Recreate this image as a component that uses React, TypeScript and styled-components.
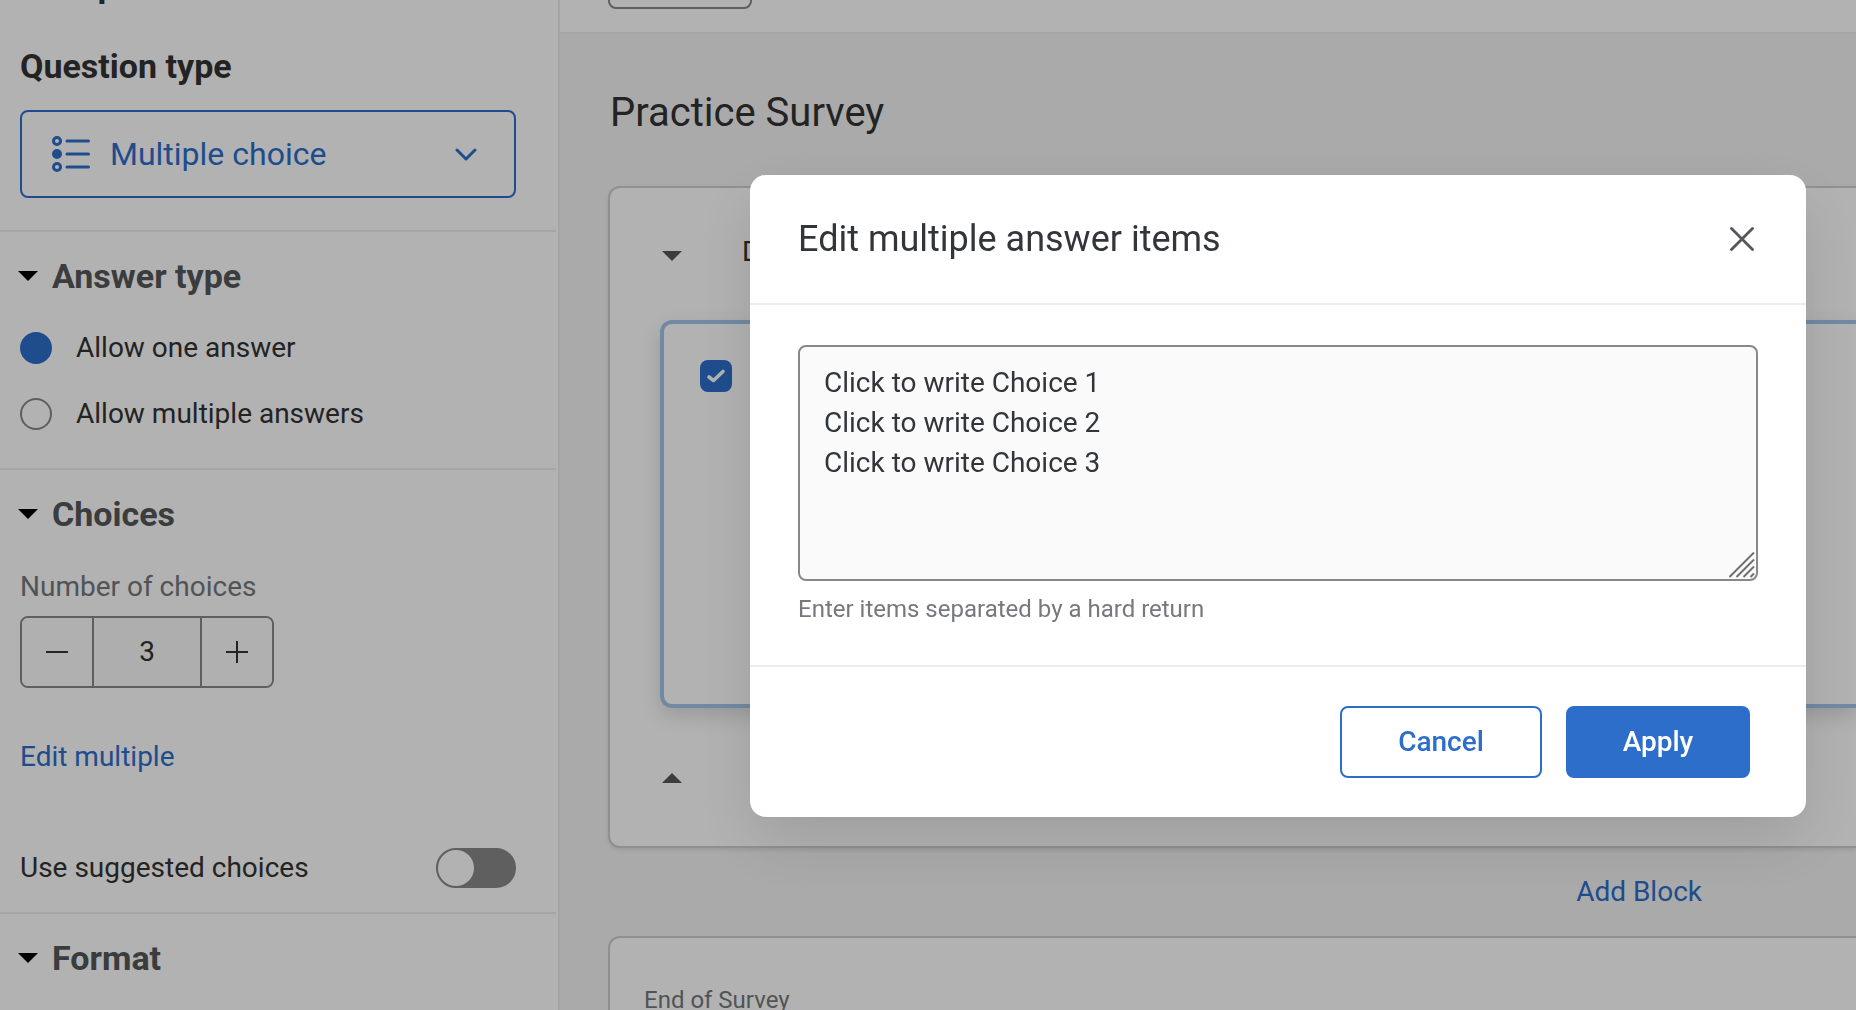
import React, { useState } from "react";
import styled, { createGlobalStyle } from "styled-components";

const FONT = `Roboto, "Noto Sans", sans-serif`;
const BLUE = "#2d6ecb";
const INK = "#32363a";
const MUTED = "#75797d";
const LINE = "#ededed";
const EDGE = "#888888";

const GlobalStyle = createGlobalStyle`
  *, *::before, *::after { box-sizing: border-box; }
  body { margin: 0; font-family: ${FONT}; font-size: 28px; line-height: 40px; color: #333333; overflow: hidden; }
  button, input, select, textarea { font: inherit; color: inherit; margin: 0; }
  h1, h2, h3, p { margin: 0; }
`;

const Page = styled.div`
  display: grid;
  grid-template-columns: 560px minmax(0, 1fr);
  height: 100vh;
  overflow: hidden;
`;

/* ---------- Sidebar ---------- */

const Sidebar = styled.aside`
  background: #ffffff;
  border-right: 2px solid ${LINE};
  overflow: hidden;
`;

const SidebarHeader = styled.header`
  display: flex;
  align-items: flex-end;
  height: 5px;
  padding: 0 20px;
  overflow: hidden;
`;

const PaneHeading = styled.h2`
  font-size: 34px;
  font-weight: 700;
  line-height: 40px;
  color: #333333;
`;

const Section = styled.section<{ $top?: number; $bottom?: number }>`
  display: flex;
  flex-direction: column;
  margin-right: 2px;
  padding: ${(p) => p.$top ?? 24}px 40px ${(p) => p.$bottom ?? 24}px 20px;

  &:not(:last-child) {
    border-bottom: 2px solid ${LINE};
  }
`;

const TypePicker = styled.div`
  position: relative;
  display: flex;
  align-items: center;
  height: 88px;
  margin-top: 24px;
  border: 2px solid ${BLUE};
  border-radius: 8px;
  color: ${BLUE};

  & > svg {
    position: absolute;
    pointer-events: none;
  }
  & > svg:first-child {
    left: 30px;
  }
  & > svg:last-child {
    right: 36px;
  }
`;

const TypeSelect = styled.select`
  appearance: none;
  width: 100%;
  height: 100%;
  padding: 0 80px 0 88px;
  border: 0;
  background: transparent;
  font-size: 32px;
  outline: none;
`;

const Collapse = styled.button`
  display: flex;
  align-items: center;
  gap: 14px;
  margin-left: -2px;
  padding: 0;
  border: 0;
  background: none;
  font-size: 34px;
  font-weight: 700;
  line-height: 40px;
  color: #53565a;
  text-align: left;

  & > svg {
    color: #000000;
  }
`;

const RadioGroup = styled.div`
  display: flex;
  flex-direction: column;
  gap: 34px;
  margin-top: 36px;
`;

const RadioLabel = styled.label`
  display: flex;
  align-items: center;
  gap: 24px;
  height: 32px;
`;

const Radio = styled.input`
  appearance: none;
  width: 32px;
  height: 32px;
  border: 2px solid ${EDGE};
  border-radius: 50%;
  background: #ffffff;

  &:checked {
    border-color: ${BLUE};
    background: ${BLUE};
  }
`;

const FieldLabel = styled.label`
  margin-top: 33px;
  color: ${MUTED};
`;

const Stepper = styled.div`
  display: flex;
  align-self: flex-start;
  width: 254px;
  height: 72px;
  margin-top: 9px;
  border: 2px solid ${EDGE};
  border-radius: 8px;
  overflow: hidden;
`;

const StepButton = styled.button`
  display: flex;
  flex: 0 0 70px;
  align-items: center;
  justify-content: center;
  padding: 0;
  border: 0;
  background: #fcfcfc;
  color: ${INK};
`;

const StepValue = styled.input`
  flex: 1;
  min-width: 0;
  padding: 0;
  border: 0;
  border-left: 2px solid ${EDGE};
  border-right: 2px solid ${EDGE};
  background: #fafafa;
  text-align: center;
  outline: none;
`;

const LinkButton = styled.button`
  align-self: flex-start;
  margin-top: 49px;
  padding: 0;
  border: 0;
  background: none;
  color: ${BLUE};
`;

const SwitchRow = styled.label`
  display: flex;
  align-items: center;
  justify-content: space-between;
  margin-top: 71px;
`;

const Switch = styled.input`
  appearance: none;
  display: flex;
  width: 80px;
  height: 40px;
  padding: 0;
  border: 2px solid ${EDGE};
  border-radius: 20px;
  background: ${EDGE};

  &::before {
    content: "";
    width: 36px;
    height: 36px;
    border-radius: 50%;
    background: #ffffff;
  }
  &:checked {
    justify-content: flex-end;
    border-color: ${BLUE};
    background: ${BLUE};
  }
`;

/* ---------- Survey canvas ---------- */

const Main = styled.main`
  display: flex;
  flex-direction: column;
  background: #f4f4f4;
  overflow: hidden;
`;

const TopBar = styled.div`
  display: flex;
  flex: none;
  align-items: flex-end;
  height: 34px;
  padding: 0 48px 23px;
  border-bottom: 2px solid ${LINE};
  background: #ffffff;
  overflow: hidden;
`;

const ToolButton = styled.button`
  flex: none;
  width: 144px;
  height: 72px;
  border: 2px solid ${EDGE};
  border-radius: 8px;
  background: #ffffff;
`;

const Canvas = styled.div`
  display: flex;
  flex-direction: column;
  padding: 55px 0 0 48px;
`;

const SurveyTitle = styled.h1`
  padding-left: 2px;
  font-size: 40px;
  font-weight: 400;
  line-height: 48px;
`;

const Block = styled.section`
  display: flex;
  flex-direction: column;
  margin-top: 49px;
  padding: 44px 0 48px 50px;
  border: 2px solid #cfcfcf;
  border-right: 0;
  border-radius: 12px 0 0 12px;
  background: #ffffff;
  box-shadow: 0 2px 4px rgba(0, 0, 0, 0.1);
`;

const BlockRow = styled.div<{ $align?: string }>`
  display: flex;
  align-items: ${(p) => p.$align ?? "center"};
  gap: 60px;
  height: 40px;
  padding-left: 2px;
`;

const IconButton = styled.button`
  display: flex;
  align-items: center;
  justify-content: center;
  padding: 0;
  border: 0;
  background: none;
  color: #53565a;
`;

const Question = styled.article`
  min-height: 388px;
  margin: 48px 0 50px;
  padding: 36px;
  border: 4px solid #a3c5ea;
  border-right: 0;
  border-radius: 12px 0 0 12px;
  box-shadow: 0 8px 20px rgba(0, 0, 0, 0.14);
`;

const CheckWrap = styled.span`
  position: relative;
  display: flex;
  width: 32px;
  height: 32px;

  & > svg {
    position: absolute;
    inset: 0;
    pointer-events: none;
  }
`;

const Check = styled.input`
  appearance: none;
  width: 32px;
  height: 32px;
  border-radius: 8px;
  background: ${BLUE};
`;

const AddRow = styled.div`
  display: flex;
  justify-content: flex-end;
  padding: 24px 154px 24px 0;

  & > button {
    margin: 0;
  }
`;

const EndBlock = styled.section`
  padding: 42px 34px 48px;
  border: 2px solid #cfcfcf;
  border-right: 0;
  border-radius: 12px 0 0 12px;
  background: #ffffff;
  color: ${MUTED};
  font-size: 24px;
`;

/* ---------- Dialog ---------- */

const Overlay = styled.div`
  position: fixed;
  inset: 0;
  display: flex;
  align-items: flex-start;
  justify-content: flex-end;
  padding: 175px 50px 0;
  background: rgba(0, 0, 0, 0.3);
`;

const Dialog = styled.div`
  display: flex;
  flex-direction: column;
  flex: 0 1 1056px;
  border-radius: 16px;
  background: #ffffff;
  color: ${INK};
  box-shadow: 0 24px 64px rgba(0, 0, 0, 0.12);
`;

const DialogHeader = styled.header`
  display: flex;
  align-items: center;
  justify-content: space-between;
  height: 130px;
  padding: 0 40px 0 48px;
  border-bottom: 2px solid ${LINE};
`;

const DialogTitle = styled.h2`
  font-size: 36px;
  font-weight: 400;
  line-height: 48px;
`;

const CloseButton = styled(IconButton)`
  width: 48px;
  height: 48px;
`;

const DialogBody = styled.div`
  display: flex;
  flex-direction: column;
  padding: 40px 48px;
`;

const AreaWrap = styled.div`
  position: relative;
  display: flex;

  & > svg {
    position: absolute;
    right: 3px;
    bottom: 3px;
    pointer-events: none;
  }
`;

const Area = styled.textarea`
  width: 100%;
  height: 236px;
  padding: 16px 24px;
  border: 2px solid ${EDGE};
  border-radius: 8px;
  background: #fafafa;
  line-height: 40px;
  resize: none;
  outline: none;
`;

const Hint = styled.p`
  margin-top: 12px;
  font-size: 24px;
  line-height: 32px;
  color: ${MUTED};
`;

const DialogFooter = styled.footer`
  display: flex;
  justify-content: flex-end;
  gap: 24px;
  padding: 39px 56px;
  border-top: 2px solid ${LINE};
`;

const ActionButton = styled.button<{ $primary?: boolean }>`
  width: ${(p) => (p.$primary ? 184 : 202)}px;
  height: 72px;
  padding: 0;
  border: 2px solid ${BLUE};
  border-radius: 8px;
  background: ${(p) => (p.$primary ? BLUE : "#ffffff")};
  color: ${(p) => (p.$primary ? "#ffffff" : BLUE)};
  font-weight: 500;
`;

/* ---------- Icons ---------- */

const Caret = ({ up = false }: { up?: boolean }) => (
  <svg width="20" height="10" viewBox="0 0 20 10" fill="currentColor" aria-hidden="true">
    <path d={up ? "M0 10L10 0L20 10Z" : "M0 0H20L10 10Z"} />
  </svg>
);

const ListIcon = () => (
  <svg width="38" height="36" viewBox="0 0 38 36" fill="none" stroke="currentColor" strokeWidth="3" aria-hidden="true">
    <circle cx="5" cy="5" r="3.5" />
    <circle cx="5" cy="18" r="3.5" fill="currentColor" />
    <circle cx="5" cy="31" r="3.5" />
    <path d="M15 5H36.500M15 18H36.500M15 31H36.500" strokeLinecap="round" />
  </svg>
);

const Chevron = () => (
  <svg width="24" height="14" viewBox="0 0 24 14" fill="none" stroke="currentColor" strokeWidth="3" strokeLinecap="round" strokeLinejoin="round" aria-hidden="true">
    <path d="M3 3L12 12L21 3" />
  </svg>
);

const Minus = () => (
  <svg width="22" height="22" viewBox="0 0 22 22" stroke="currentColor" strokeWidth="2" aria-hidden="true">
    <path d="M0 11H22" />
  </svg>
);

const Plus = () => (
  <svg width="22" height="22" viewBox="0 0 22 22" stroke="currentColor" strokeWidth="2" aria-hidden="true">
    <path d="M0 11H22M11 0V22" />
  </svg>
);

const Tick = () => (
  <svg width="32" height="32" viewBox="0 0 32 32" fill="none" stroke="#ffffff" strokeWidth="3.600" strokeLinecap="round" strokeLinejoin="round" aria-hidden="true">
    <path d="M9 17L13.500 20.500L23 11.500" />
  </svg>
);

const Cross = () => (
  <svg width="24" height="24" viewBox="0 0 24 24" stroke="#53565a" strokeWidth="2.800" strokeLinecap="round" aria-hidden="true">
    <path d="M1.500 1.500L22.500 22.500M22.500 1.500L1.500 22.500" />
  </svg>
);

const Grip = () => (
  <svg width="26" height="26" viewBox="0 0 26 26" stroke="#707070" strokeWidth="2" aria-hidden="true">
    <path d="M0.500 25L25 0.500M7.500 25L25 7.500M14.500 25L25 14.500M21.500 25L25 21.500" />
  </svg>
);

/* ---------- Page ---------- */

const SectionToggle = ({ children }: { children: React.ReactNode }) => (
  <Collapse type="button" aria-expanded="true">
    <Caret />
    {children}
  </Collapse>
);

export default function App() {
  const [mode, setMode] = useState("one");
  const [count, setCount] = useState(3);
  const [items, setItems] = useState(
    "Click to write Choice 1\nClick to write Choice 2\nClick to write Choice 3"
  );

  return (
    <>
      <GlobalStyle />
      <Page>
        <Sidebar>
          <SidebarHeader>
            <PaneHeading>Edit question</PaneHeading>
          </SidebarHeader>

          <Section $top={41} $bottom={32}>
            <PaneHeading as="label" htmlFor="question-type">
              Question type
            </PaneHeading>
            <TypePicker>
              <ListIcon />
              <TypeSelect id="question-type" defaultValue="mc">
                <option value="mc">Multiple choice</option>
              </TypeSelect>
              <Chevron />
            </TypePicker>
          </Section>

          <Section $bottom={38}>
            <SectionToggle>Answer type</SectionToggle>
            <RadioGroup role="radiogroup" aria-label="Answer type">
              <RadioLabel>
                <Radio type="radio" name="answers" checked={mode === "one"} onChange={() => setMode("one")} />
                Allow one answer
              </RadioLabel>
              <RadioLabel>
                <Radio type="radio" name="answers" checked={mode === "many"} onChange={() => setMode("many")} />
                Allow multiple answers
              </RadioLabel>
            </RadioGroup>
          </Section>

          <Section>
            <SectionToggle>Choices</SectionToggle>
            <FieldLabel htmlFor="choice-count">Number of choices</FieldLabel>
            <Stepper>
              <StepButton type="button" aria-label="Fewer choices" onClick={() => setCount(Math.max(1, count - 1))}>
                <Minus />
              </StepButton>
              <StepValue id="choice-count" inputMode="numeric" value={count} onChange={(e) => setCount(Number(e.target.value) || 1)} />
              <StepButton type="button" aria-label="More choices" onClick={() => setCount(count + 1)}>
                <Plus />
              </StepButton>
            </Stepper>
            <LinkButton type="button">Edit multiple</LinkButton>
            <SwitchRow>
              Use suggested choices
              <Switch type="checkbox" role="switch" />
            </SwitchRow>
          </Section>

          <Section>
            <SectionToggle>Format</SectionToggle>
          </Section>
        </Sidebar>

        <Main>
          <TopBar>
            <ToolButton type="button" aria-label="Tools" />
          </TopBar>
          <Canvas>
            <SurveyTitle>Practice Survey</SurveyTitle>
            <Block>
              <BlockRow $align="baseline">
                <IconButton type="button" aria-label="Collapse block">
                  <Caret />
                </IconButton>
                <span>D</span>
              </BlockRow>
              <Question>
                <CheckWrap>
                  <Check type="checkbox" defaultChecked aria-label="Select question" />
                  <Tick />
                </CheckWrap>
              </Question>
              <BlockRow>
                <IconButton type="button" aria-label="Collapse to top">
                  <Caret up />
                </IconButton>
              </BlockRow>
            </Block>
            <AddRow>
              <LinkButton type="button">Add Block</LinkButton>
            </AddRow>
            <EndBlock>End of Survey</EndBlock>
          </Canvas>
        </Main>
      </Page>

      <Overlay>
        <Dialog role="dialog" aria-modal="true" aria-labelledby="dialog-title">
          <DialogHeader>
            <DialogTitle id="dialog-title">Edit multiple answer items</DialogTitle>
            <CloseButton type="button" aria-label="Close">
              <Cross />
            </CloseButton>
          </DialogHeader>
          <DialogBody>
            <AreaWrap>
              <Area
                aria-labelledby="dialog-title"
                aria-describedby="items-hint"
                value={items}
                onChange={(e) => setItems(e.target.value)}
              />
              <Grip />
            </AreaWrap>
            <Hint id="items-hint">Enter items separated by a hard return</Hint>
          </DialogBody>
          <DialogFooter>
            <ActionButton type="button">Cancel</ActionButton>
            <ActionButton type="button" $primary>
              Apply
            </ActionButton>
          </DialogFooter>
        </Dialog>
      </Overlay>
    </>
  );
}
